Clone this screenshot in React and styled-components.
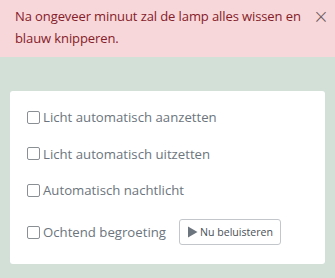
import React from "react";
import styled, { createGlobalStyle } from "styled-components";

const GlobalStyle = createGlobalStyle`
  html, body {
    margin: 0;
    padding: 0;
    background: #d3e0d8;
    font-family: "Open Sans", "Liberation Sans", sans-serif;
  }
`;

const options = [
  "Licht automatisch aanzetten",
  "Licht automatisch uitzetten",
  "Automatisch nachtlicht",
];

export default function App() {
  return (
    <Page>
      <GlobalStyle />
      <Alert>
        <AlertText>
          Na ongeveer minuut zal de lamp alles wissen en blauw knipperen.
        </AlertText>
        <CloseButton aria-label="Sluiten">×</CloseButton>
      </Alert>
      <Content>
        <Card>
          {options.map((label) => (
            <Row key={label}>
              <Check type="checkbox" />
              <Label>{label}</Label>
            </Row>
          ))}
          <Row $last>
            <Check type="checkbox" />
            <Label>Ochtend begroeting</Label>
            <PlayButton>
              <svg width="11" height="12" viewBox="0 0 11 12">
                <path d="M1 0.5 L10.5 6 L1 11.5 Z" fill="#6c757d" />
              </svg>
              Nu beluisteren
            </PlayButton>
          </Row>
        </Card>
      </Content>
    </Page>
  );
}

const Page = styled.div`
  width: 335px;
  min-height: 278px;
  background: #d3e0d8;
`;

const Alert = styled.div`
  display: flex;
  align-items: flex-start;
  background: #f8d7da;
  color: #842029;
  padding: 5px 6px 8px 15px;
  min-height: 44px;
`;

const AlertText = styled.p`
  flex: 1;
  margin: 0;
  font-size: 13px;
  line-height: 22px;
  letter-spacing: -0.1px;
`;

const CloseButton = styled.button`
  border: none;
  background: none;
  padding: 0;
  margin-left: 10px;
  color: #6b5a5c;
  font-size: 19px;
  line-height: 22px;
  font-family: "DejaVu Sans", sans-serif;
  font-weight: 300;
`;

const Content = styled.div`
  padding: 34px 10px 13px;
`;

const Card = styled.div`
  background: #ffffff;
  border-radius: 3px;
  padding: 17px 17px 19px;
  display: flex;
  flex-direction: column;
  gap: 18.5px;
`;

const Row = styled.label`
  display: flex;
  align-items: center;
  gap: 3px;
  min-height: ${(p) => (p.$last ? "26px" : "18px")};
  margin-top: ${(p) => (p.$last ? "1.5px" : "0")};
`;

const Check = styled.input`
  appearance: none;
  width: 13px;
  height: 13px;
  margin: 0;
  border: 1px solid #8a8f94;
  border-radius: 2px;
  background: #fff;
`;

const Label = styled.span`
  color: #6c757d;
  font-size: 13.2px;
  line-height: 18px;
`;

const PlayButton = styled.button`
  display: flex;
  align-items: center;
  gap: 2px;
  margin-left: 10px;
  height: 26px;
  padding: 0 7px 0 7px;
  background: #fff;
  border: 1px solid #c3c7cb;
  border-radius: 3px;
  color: #495057;
  font-family: "Open Sans", "Liberation Sans", sans-serif;
  font-size: 10.6px;
`;
